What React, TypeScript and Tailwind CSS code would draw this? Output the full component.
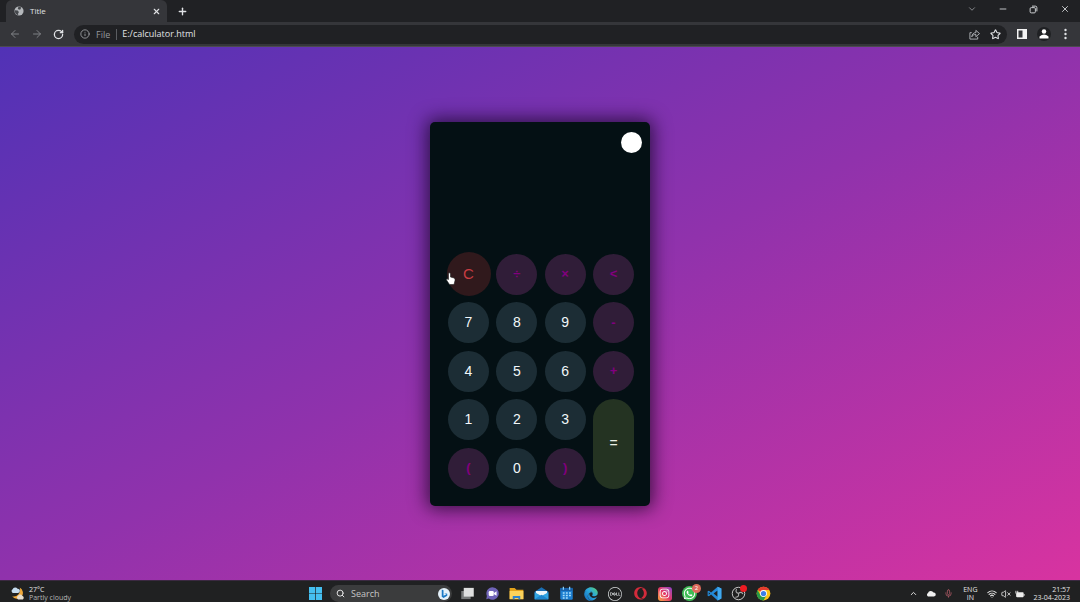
import { useState } from "react";
import type { ReactNode } from "react";
import { FaInstagram, FaOpera, FaWhatsapp, FaEdge } from "react-icons/fa";
import { SiDell } from "react-icons/si";
import {
  ArrowLeft,
  ArrowRight,
  ChevronDown,
  ChevronUp,
  Info,
  Mic,
  Minus,
  Plus,
  RotateCw,
  Search,
  Star,
  VolumeX,
  Wifi,
  X,
} from "lucide-react";

function Globe() {
  return (
    <svg viewBox="0 0 24 24" className="size-[10px]" aria-hidden="true">
      <circle cx="12" cy="12" r="11" fill="#b4b7bb" />
      <path d="M2 10 L9 11 L12 15 L10 17 L10 22 C4 20 1 15 2 10 Z M11 2 L17 3 L16 8 L12 9 L9 6 Z" fill="#45484c" />
    </svg>
  );
}

function ShareIcon() {
  return (
    <svg viewBox="0 0 24 24" className="size-[11px]" fill="none" stroke="#b4b7bb" strokeWidth="2" strokeLinejoin="round" aria-hidden="true">
      <path d="M6 8 H2 V22 H19 V17" />
      <path d="M6 17 C7 11 10 8 15 8 V3 L23 10 L15 17 V12 C11 12 8 13 6 17 Z" />
    </svg>
  );
}

function RestoreIcon() {
  return (
    <svg viewBox="0 0 24 24" className="size-[9px]" fill="none" stroke="#d0d2d5" strokeWidth="2.6" aria-hidden="true">
      <rect x="3" y="7" width="14" height="14" rx="3" />
      <path d="M8 3 H17 Q21 3 21 7 V17" />
    </svg>
  );
}

function SidePanelIcon() {
  return (
    <svg viewBox="0 0 20 20" className="size-[10px]" aria-hidden="true">
      <rect x="1.5" y="1.5" width="17" height="17" fill="none" stroke="#f4f4f4" strokeWidth="3" />
      <rect x="11" y="2" width="7" height="16" fill="#f4f4f4" />
    </svg>
  );
}

function TaskView() {
  return (
    <svg viewBox="0 0 24 24" className="size-[15px]" aria-hidden="true">
      <rect x="2" y="8" width="15" height="13" fill="#77797a" />
      <rect x="6" y="3" width="16" height="14" fill="#dedfdf" />
    </svg>
  );
}

function Meet() {
  return (
    <svg viewBox="0 0 24 24" className="size-[15px]" aria-hidden="true">
      <path d="M12 2 A10 10 0 1 1 6 20 L2 21 L3 16 A10 10 0 0 1 12 2 Z" fill="#6f63b7" />
      <rect x="6" y="8" width="8" height="8" rx="2" fill="#fff" />
      <path d="M14.5 11 L18.5 8.5 V15.5 L14.5 13 Z" fill="#fff" />
    </svg>
  );
}

function Folder() {
  return (
    <svg viewBox="0 0 24 24" className="size-[15px]" aria-hidden="true">
      <path d="M1 3 H9 L12 6 H23 V21 H1 Z" fill="#e3a21b" />
      <path d="M1 8 H23 V21 H1 Z" fill="#fcd25a" />
      <path d="M6 21 V16 H18 V21 H15 V19 H9 V21 Z" fill="#2d83cf" />
    </svg>
  );
}

function Mail() {
  return (
    <svg viewBox="0 0 24 24" className="size-[15px]" aria-hidden="true">
      <path d="M1 9 L12 2 L23 9 V21 H1 Z" fill="#1b6fb4" />
      <path d="M3 8 H21 V12 L12 17 L3 12 Z" fill="#eef5fa" />
      <path d="M1 10 L12 16 L23 10 V21 H1 Z" fill="#32a5e3" />
      <path d="M1 21 L12 14 L23 21 Z" fill="#1d86cf" />
    </svg>
  );
}

function CalendarApp() {
  return (
    <svg viewBox="0 0 24 24" className="size-[15px]" aria-hidden="true">
      <rect x="2" y="3" width="20" height="19" rx="2" fill="#1c7ed0" />
      <rect x="2" y="3" width="20" height="5" fill="#1760a8" />
      <path d="M7 1 V6 M17 1 V6" stroke="#8bd0f7" strokeWidth="2" />
      <path d="M6 11 H9 M11 11 H14 M16 11 H19 M6 15 H9 M11 15 H14 M16 15 H19 M6 19 H9 M11 19 H14" stroke="#a9defb" strokeWidth="2.4" />
    </svg>
  );
}

function Edge() {
  return (
    <span className="flex rounded-full">
      <svg width="0" height="0" className="absolute" aria-hidden="true">
        <linearGradient id="edge-fill" x1="0" y1="1" x2="1" y2="0">
          <stop offset="0" stopColor="#1464b8" />
          <stop offset="0.55" stopColor="#2aa8dd" />
          <stop offset="1" stopColor="#5fd36a" />
        </linearGradient>
      </svg>
      <FaEdge size={14} fill="url(#edge-fill)" />
    </span>
  );
}

function Code() {
  return (
    <svg viewBox="0 0 24 24" className="size-[15px]" aria-hidden="true">
      <path d="M17 1 L23 4 V20 L17 23 L6.5 13.5 L3 16.5 L1 15.5 V8.5 L3 7.5 L6.5 10.5 Z M17 7 L10.5 12 L17 17 Z M2.8 10 V14 L5 12 Z" fill="#2389d7" fillRule="evenodd" />
      <path d="M17 1 L23 4 V20 L17 23 Z" fill="#40a9ee" />
    </svg>
  );
}

function Recorder() {
  return (
    <span className="relative flex">
      <svg viewBox="0 0 24 24" className="size-[15px]" aria-hidden="true">
        <circle cx="12" cy="12" r="10" fill="#202020" stroke="#c8c8c8" strokeWidth="1.6" />
        <path d="M12 12 C8 11 7 8 9 5 M12 12 C15 9 18 10 19 13 M12 12 C13 16 11 18 7 18" fill="none" stroke="#a9a9a9" strokeWidth="1.8" />
      </svg>
      <span className="absolute -top-px -right-px size-[7px] rounded-full bg-[#ee1b22]" />
    </span>
  );
}

function Chrome() {
  return (
    <svg viewBox="0 0 24 24" className="size-[15px]" aria-hidden="true">
      <circle cx="12" cy="12" r="11" fill="#fbc116" />
      <path d="M12 12 L2.5 6.5 A11 11 0 0 1 21.5 6.5 H12 Z" fill="#e33b2e" />
      <path d="M2.5 6.5 A11 11 0 0 0 12 23 L16.8 14.8 L7.2 14.8 Z" fill="#279847" />
      <circle cx="12" cy="12" r="5.5" fill="#fff" />
      <circle cx="12" cy="12" r="4.2" fill="#3b7ee8" />
    </svg>
  );
}

function Weather() {
  return (
    <svg viewBox="0 0 28 28" className="size-[15px]" aria-hidden="true">
      <path d="M18 3 A11 11 0 1 1 4 19 A12 12 0 0 0 18 3 Z" fill="#efa83b" />
      <path d="M5 13 A4 4 0 0 1 5 6 A5 5 0 0 1 14 5 A4 4 0 0 1 15 13 Z" fill="#c5dbee" />
      <path d="M15 25 A4 4 0 0 1 15 18 A5 5 0 0 1 23 18 A4 4 0 0 1 24 25 Z" fill="#e8ddcd" />
    </svg>
  );
}

function HandCursor() {
  return (
    <svg viewBox="0 0 20 28" className="pointer-events-none absolute top-[18px] -left-0.5 h-[14px] w-[10px]" aria-hidden="true">
      <path d="M5 2 Q8 0 9 4 V10 L16 12 Q19 13 18 17 L16 25 H7 L1 16 Q1 12 5 15 Z" fill="#fff" stroke="#222" strokeWidth="1.2" />
    </svg>
  );
}

function BrowserBar() {
  return (
    <header className="bg-[#202124] text-[#e0e2e5]">
      <div className="flex h-[22px] items-center">
        <div className="ml-1.5 flex h-full w-[161px] items-center gap-1.5 rounded-t-md bg-[#35363a] pr-1.5 pl-2 text-[8px]">
          <Globe />
          <span className="flex-1">Title</span>
          <button aria-label="Close tab"><X size={9} strokeWidth={3} /></button>
        </div>
        <button aria-label="New tab" className="ml-2.5"><Plus size={11} strokeWidth={3} /></button>
        <div className="ml-auto flex items-center pr-2.5 pb-1">
          <button aria-label="Search tabs" className="flex w-[31px] justify-center text-[#9b9da1]"><ChevronDown size={10} /></button>
          <button aria-label="Minimize" className="flex w-[31px] justify-center"><Minus size={10} /></button>
          <button aria-label="Restore" className="flex w-[31px] justify-center"><RestoreIcon /></button>
          <button aria-label="Close" className="ml-[11px]"><X size={10} /></button>
        </div>
      </div>
      <div className="flex h-[25px] items-center border-b border-[#4b4a50] bg-[#35363a] pr-3 pl-[9px]">
        <button aria-label="Back" className="mr-2.5 text-[#7f8185]"><ArrowLeft size={12} /></button>
        <button aria-label="Forward" className="mr-2.5 text-[#7f8185]"><ArrowRight size={12} /></button>
        <button aria-label="Reload"><RotateCw size={11} strokeWidth={2.8} /></button>
        <div className="mr-2.5 ml-2.5 flex h-[19px] min-w-0 flex-1 items-center rounded-full bg-[#202124] px-1.5 text-[9px]">
          <Info size={10} className="mr-1.5 shrink-0 text-[#a5a7ab]" />
          <span className="mr-[5px] border-r border-[#5b5d61] pr-1.5 leading-[11px] text-[#96989c]">File</span>
          <input aria-label="Address" defaultValue="E:/calculator.html" className="min-w-0 flex-1 bg-transparent outline-none" />
          <button aria-label="Share" className="mr-2.5"><ShareIcon /></button>
          <button aria-label="Bookmark"><Star size={11} strokeWidth={2.4} /></button>
        </div>
        <button aria-label="Side panel" className="mr-2.5"><SidePanelIcon /></button>
        <button aria-label="Profile" className="flex size-[14px] items-center justify-center rounded-full bg-[#1f2023]">
          <svg viewBox="0 0 20 20" className="size-[10px]" aria-hidden="true">
            <circle cx="10" cy="5" r="4.5" fill="#fff" />
            <path d="M1 19 V15 Q10 7 19 15 V19 Z" fill="#fff" />
          </svg>
        </button>
        <button aria-label="Menu" className="ml-3">
          <svg viewBox="0 0 10 24" className="h-3 w-[5px]" fill="#e0e2e5" aria-hidden="true">
            <circle cx="5" cy="4" r="2.4" /><circle cx="5" cy="12" r="2.4" /><circle cx="5" cy="20" r="2.4" />
          </svg>
        </button>
      </div>
    </header>
  );
}

type Kind = "digit" | "operator" | "clear" | "equals";

const keys: { label: string; kind: Kind }[] = [
  { label: "C", kind: "clear" },
  { label: "÷", kind: "operator" },
  { label: "×", kind: "operator" },
  { label: "<", kind: "operator" },
  { label: "7", kind: "digit" },
  { label: "8", kind: "digit" },
  { label: "9", kind: "digit" },
  { label: "-", kind: "operator" },
  { label: "4", kind: "digit" },
  { label: "5", kind: "digit" },
  { label: "6", kind: "digit" },
  { label: "+", kind: "operator" },
  { label: "1", kind: "digit" },
  { label: "2", kind: "digit" },
  { label: "3", kind: "digit" },
  { label: "=", kind: "equals" },
  { label: "(", kind: "operator" },
  { label: "0", kind: "digit" },
  { label: ")", kind: "operator" },
];

const keyStyles: Record<Kind, string> = {
  digit: "size-[41px] bg-[#1c2d35] text-[14px] text-[#f2f8fa]",
  operator: "size-[41px] bg-[#301d38] text-[13px] font-bold text-[#82007f]",
  clear: "size-[44px] bg-[#30191c] text-[15px] text-[#c83d43]",
  equals: "row-span-2 h-full w-[41px] bg-[#243322] text-[14px] text-[#e9efe5]",
};

function Calculator() {
  const [value, setValue] = useState("");
  const press = (label: string) => {
    if (label === "C") setValue("");
    else if (label === "<") setValue(value.slice(0, -1));
    else if (label !== "=") setValue(value + label);
  };
  return (
    <section aria-label="Calculator" className="rounded-[5px] bg-[#041014] pt-2.5 pr-4 pb-[17px] pl-[18px] font-['Liberation_Sans',sans-serif] shadow-[0_0_18px_3px_rgba(20,5,35,0.75)]">
      <div className="-mr-2 flex justify-end">
        <button aria-label="Toggle theme" className="size-[21px] rounded-full bg-white" />
      </div>
      <output className="block h-[101px] w-[186px] overflow-hidden pt-10 text-right text-2xl text-white">{value}</output>
      <div className="relative">
        <div className="grid h-[235px] w-[186px] grid-cols-[repeat(4,41px)] grid-rows-[repeat(5,41px)] content-between justify-between">
          {keys.map((key) => (
            <div key={key.label} className={key.kind === "equals" ? "row-span-2 flex" : "flex items-center justify-center"}>
              <button onClick={() => press(key.label)} className={`shrink-0 rounded-full ${keyStyles[key.kind]}`}>
                {key.label}
              </button>
            </div>
          ))}
        </div>
        <HandCursor />
      </div>
    </section>
  );
}

function AppButton({ label, children }: { label: string; children: ReactNode }) {
  return <button aria-label={label} className="flex size-[15px] items-center justify-center">{children}</button>;
}

function Taskbar() {
  return (
    <footer className="grid h-[22px] grid-cols-[1fr_auto_1fr] items-center border-t border-[#3b2941] bg-[#202122] text-[#e4e4e4]">
      <button className="flex items-center gap-1 pt-1 pl-2.5 text-left text-[7px] leading-[8px]">
        <Weather />
        <span><span className="block">27°C</span><span className="block text-[#b5b5b5]">Partly cloudy</span></span>
      </button>
      <div className="flex items-center pt-1">
        <button aria-label="Start" className="mr-2">
          <svg viewBox="0 0 26 26" className="size-[13px]" aria-hidden="true">
            <path d="M0 0 H12.3 V12.3 H0 Z M13.7 0 H26 V12.3 H13.7 Z M0 13.7 H12.3 V26 H0 Z M13.7 13.7 H26 V26 H13.7 Z" fill="#45bff0" />
          </svg>
        </button>
        <label className="mr-2 flex h-[17px] w-[122px] items-center gap-1.5 rounded-full bg-[#3b3c3d] pr-0.5 pl-1.5">
          <Search size={9} strokeWidth={2.6} className="shrink-0" />
          <input aria-label="Search" placeholder="Search" className="w-0 min-w-0 flex-1 bg-transparent text-[9px] outline-none placeholder:text-[#c6c6c6]" />
          <svg viewBox="0 0 24 24" className="size-3 shrink-0" aria-hidden="true">
            <circle cx="12" cy="12" r="12" fill="#e5f1fa" />
            <path d="M7.5 3 L11 4.5 V15.5 L17 12.5 L12 10 L18.5 11.5 V15.5 L11 20 L7.5 17.5 Z" fill="#1b79c5" />
          </svg>
        </label>
        <div className="flex w-[311px] items-center justify-between">
          <AppButton label="Task view"><TaskView /></AppButton>
          <AppButton label="Chat"><Meet /></AppButton>
          <AppButton label="File Explorer"><Folder /></AppButton>
          <AppButton label="Mail"><Mail /></AppButton>
          <AppButton label="Calendar"><CalendarApp /></AppButton>
          <AppButton label="Edge"><Edge /></AppButton>
          <AppButton label="Dell"><SiDell size={14} color="#d8dcdd" /></AppButton>
          <AppButton label="Opera"><FaOpera size={13} color="#d32b3b" /></AppButton>
          <AppButton label="Instagram">
            <span className="flex size-[14px] items-center justify-center rounded-[3px] bg-linear-to-tr from-[#f9a632] via-[#e33466] to-[#8d3bc9]"><FaInstagram size={11} color="#fff" /></span>
          </AppButton>
          <AppButton label="WhatsApp">
            <span className="relative flex size-[15px] items-center justify-center rounded-full bg-[#3fbd55]">
              <FaWhatsapp size={13} color="#fff" />
              <span className="absolute -top-0.5 -right-1 size-[9px] rounded-full bg-[#dd6a5c] text-center text-[6px] leading-[9px] text-white">2</span>
            </span>
          </AppButton>
          <AppButton label="Code"><Code /></AppButton>
          <AppButton label="Recorder"><Recorder /></AppButton>
          <AppButton label="Chrome"><Chrome /></AppButton>
        </div>
      </div>
      <div className="flex items-center justify-end pt-1 pr-2.5 text-[7px] leading-[8px]">
        <ChevronUp size={9} strokeWidth={2.5} className="mr-2" />
        <svg viewBox="0 0 20 14" className="mr-2 h-[7px] w-[10px]" aria-hidden="true">
          <path d="M4 13 A4 4 0 0 1 4 6 A6 6 0 0 1 15 5 A4 4 0 0 1 16 13 Z" fill="#f0f0f0" />
        </svg>
        <Mic size={9} color="#b45c68" className="mr-2.5" />
        <span className="mr-2.5 text-center"><span className="block">ENG</span><span className="block">IN</span></span>
        <Wifi size={10} strokeWidth={2.5} className="mr-1" />
        <VolumeX size={10} className="mr-1" />
        <svg viewBox="0 0 22 16" className="mr-2 h-2 w-[10px]" aria-hidden="true">
          <rect x="3" y="4" width="16" height="11" rx="2" fill="#ededed" />
          <path d="M20 8 V12 M2 1 V7 M6 1 V7 M4 7 V14" stroke="#ededed" strokeWidth="2" />
        </svg>
        <time className="text-right"><span className="block">21:57</span><span className="block">23-04-2023</span></time>
      </div>
    </footer>
  );
}

export default function App() {
  return (
    <div className="flex min-h-screen flex-col font-['Open_Sans',sans-serif]">
      <BrowserBar />
      <main className="flex flex-1 items-center justify-center bg-[linear-gradient(to_bottom_right,#5132b6,#9032ac_50%,#d833a0)]">
        <Calculator />
      </main>
      <Taskbar />
    </div>
  );
}
